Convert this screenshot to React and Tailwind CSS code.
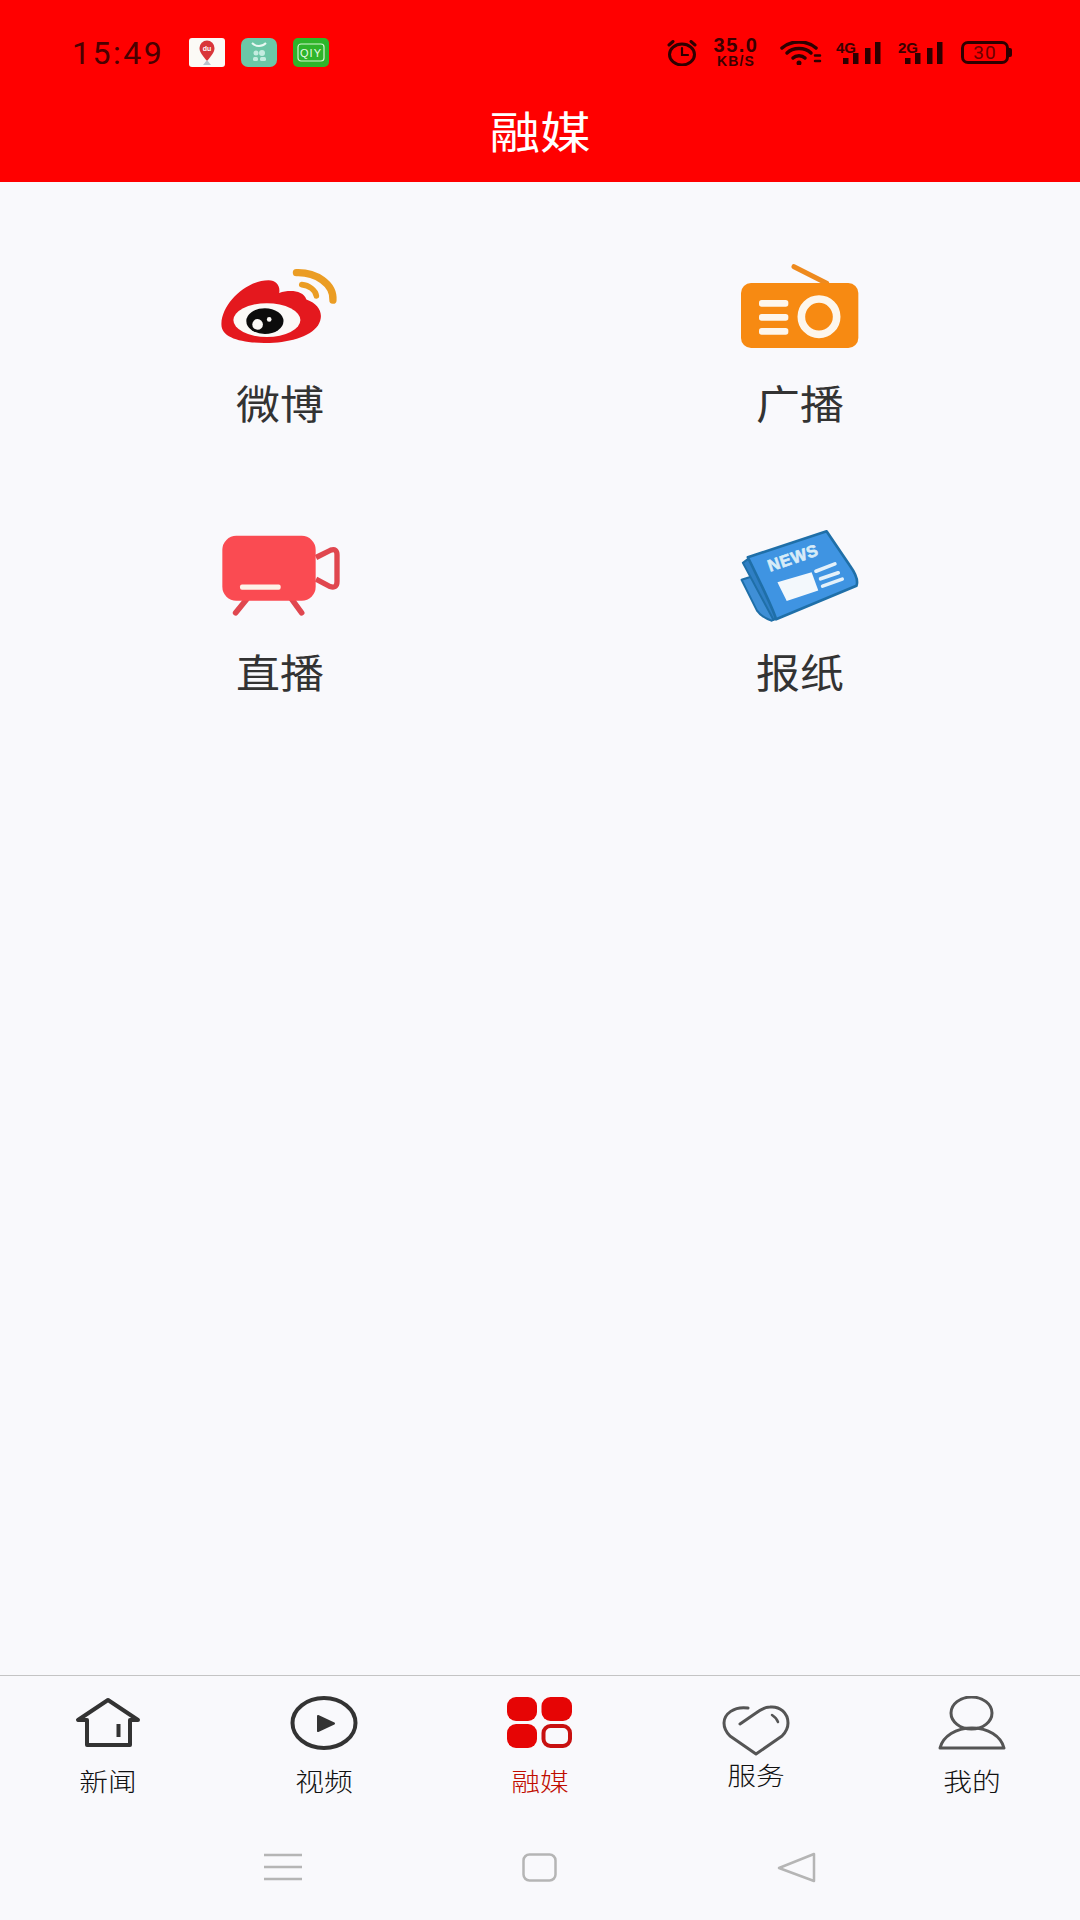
import React from "react"

const items = [
  { label: "微博", icon: <WeiboIcon /> },
  { label: "广播", icon: <RadioIcon /> },
  { label: "直播", icon: <CameraIcon /> },
  { label: "报纸", icon: <NewsIcon /> },
]

const tabs = [
  { label: "新闻", icon: <HomeIcon />, labelClass: "mt-[9px] text-[#111]" },
  { label: "视频", icon: <PlayIcon />, labelClass: "mt-[9px] text-[#111]" },
  { label: "融媒", icon: <GridIcon />, labelClass: "mt-[9px] text-[#c00d00]" },
  { label: "服务", icon: <HeartIcon />, labelClass: "mt-[3px] text-[#111]" },
  { label: "我的", icon: <UserIcon />, labelClass: "mt-[9px] text-[#111]" },
]

function WeiboIcon() {
  return (
    <svg width="122" height="78" viewBox="90 80 365 235">
      <path d="M96 250C98 190 170 120 238 120C262 120 274 138 270 158C302 148 342 150 352 178C394 193 406 225 387 256C362 292 290 310 225 309C150 307 94 292 96 250Z" fill="#e4181e" />
      <ellipse cx="233" cy="240" rx="101" ry="51" fill="#fbf9f7" />
      <ellipse cx="227" cy="243" rx="56" ry="39" fill="#0c0c0c" />
      <circle cx="205" cy="253" r="16" fill="#fbf9f7" />
      <circle cx="240" cy="238" r="7" fill="#fbf9f7" />
      <path d="M322 97C380 95 435 130 432 180" stroke="#eb9d24" strokeWidth="22" strokeLinecap="round" fill="none" />
      <path d="M338 133C360 135 380 150 382 167" stroke="#eb9d24" strokeWidth="17" strokeLinecap="round" fill="none" />
    </svg>
  )
}

function RadioIcon() {
  return (
    <svg width="120" height="85" viewBox="90 70 360 255">
      <path d="M252 78L350 128" stroke="#ee8a1e" strokeWidth="15" strokeLinecap="round" />
      <rect x="93" y="127" width="352" height="195" rx="30" fill="#f78a12" />
      <rect x="147" y="178" width="88" height="20" rx="8" fill="#fdf6ec" />
      <rect x="147" y="220" width="88" height="20" rx="8" fill="#fdf6ec" />
      <rect x="147" y="262" width="88" height="20" rx="8" fill="#fdf6ec" />
      <circle cx="327" cy="228" r="53" stroke="#fdf6ec" strokeWidth="23" fill="none" />
    </svg>
  )
}

function CameraIcon() {
  return (
    <svg width="120" height="82" viewBox="90 70 360 245">
      <path d="M170 265L137 306M305 265L335 306" stroke="#e0474f" strokeWidth="17" strokeLinecap="round" />
      <path d="M378 140L422 118Q441 112 441 132V212Q441 234 420 227L378 205" stroke="#e0474f" strokeWidth="16" fill="none" />
      <rect x="97" y="75" width="280" height="195" rx="42" fill="#fa4b52" />
      <rect x="150" y="221" width="122" height="16" rx="6" fill="#fdf2e8" />
    </svg>
  )
}

function NewsIcon() {
  return (
    <svg width="120" height="93" viewBox="90 55 360 280">
      <path d="M94 208L125 198L205 322L185 331C165 325 150 315 140 300Z" fill="#3f8fd6" stroke="#1f6fa8" strokeWidth="6" strokeLinejoin="round" />
      <path d="M98 157L118 142L208 320L190 328Z" fill="#2f7fc4" stroke="#1f6fa8" strokeWidth="6" strokeLinejoin="round" />
      <path d="M113 140L350 62L420 165C438 190 446 210 440 226L198 327C190 300 150 215 113 140Z" fill="#3f94e2" stroke="#1f6fa8" strokeWidth="8" strokeLinejoin="round" />
      <text x="180" y="184" transform="rotate(-19 180 184)" fontFamily="'Liberation Sans', sans-serif" fontWeight="700" fontSize="50" letterSpacing="2" fill="#d8ecf8" stroke="#d8ecf8" strokeWidth="2">NEWS</text>
      <path d="M202 215L305 185L325 240L230 272Z" fill="#f3f8fc" />
      <path d="M318 182L375 160M332 205L385 187M338 227L397 206" stroke="#e4f1fa" strokeWidth="11" strokeLinecap="round" />
    </svg>
  )
}

function HomeIcon() {
  return (
    <svg width="68" height="60" viewBox="0 0 68 60" fill="none" stroke="#333" strokeLinejoin="round">
      <path d="M13 24V49H56V24H64L34 4L4 24Z" strokeWidth="4" />
      <path d="M44.500 28V41" strokeWidth="4" />
    </svg>
  )
}

function PlayIcon() {
  return (
    <svg width="68" height="60" viewBox="0 0 68 60" fill="none" stroke="#333" strokeLinejoin="round">
      <ellipse cx="34" cy="27" rx="31.500" ry="25" strokeWidth="4" />
      <path d="M28 20L44 27.500L28 35Z" fill="#333" strokeWidth="2" />
    </svg>
  )
}

function GridIcon() {
  return (
    <svg width="68" height="60" viewBox="0 0 68 60">
      <rect x="1" y="1" width="30" height="24" rx="9" fill="#e60505" />
      <rect x="35.500" y="1" width="30.500" height="24" rx="9" fill="#e60505" />
      <rect x="1" y="28" width="30" height="24" rx="9" fill="#e60505" />
      <rect x="37.500" y="30" width="26.500" height="20" rx="7" fill="none" stroke="#c81010" strokeWidth="4" />
    </svg>
  )
}

function HeartIcon() {
  return (
    <svg width="68" height="60" viewBox="0 0 68 60" fill="none" stroke="#555" strokeLinecap="round" strokeLinejoin="round">
      <path d="M26 12C12 10 2 18 2 27C2 32 4 36 8 40L34 58L60 40C64 36 66 32 66 27C66 17 58 10 48 11C42 11 38 14 34 17L18 28" strokeWidth="3" />
      <path d="M50 19C53 21 55 23 56 26" strokeWidth="2.500" />
    </svg>
  )
}

function UserIcon() {
  return (
    <svg width="68" height="60" viewBox="0 0 68 60" fill="none" stroke="#555" strokeLinejoin="round">
      <ellipse cx="33.500" cy="17" rx="20.500" ry="16" strokeWidth="3" />
      <path d="M2 52C5 40 18 32 34 32C50 32 63 40 66 52Z" strokeWidth="3" />
    </svg>
  )
}

function DuIcon() {
  return (
    <svg width="36" height="29" viewBox="0 0 36 29">
      <rect width="36" height="29" rx="3" fill="#fbfaf6" />
      <path d="M18 23C13 17 10.500 14 10.500 10A7.500 7.500 0 0 1 25.500 10C25.500 14 23 17 18 23Z" fill="#d9363a" />
      <text x="18" y="12.500" textAnchor="middle" fontFamily="'Liberation Sans', sans-serif" fontWeight="700" fontSize="7" fill="#fff">du</text>
      <path d="M14 27L18 22L22 27Z" fill="#b9c4cc" />
    </svg>
  )
}

function TeaIcon() {
  return (
    <svg width="36" height="29" viewBox="0 0 36 29">
      <rect width="36" height="29" rx="7" fill="#6cc7a7" />
      <path d="M11 5C15 9 21 9 25 5" stroke="#e8f8f2" strokeWidth="2" fill="none" />
      <circle cx="15" cy="15" r="2.500" fill="#c4ece0" />
      <circle cx="21" cy="15" r="3" fill="#c4ece0" />
      <rect x="12" y="19" width="5" height="4" rx="1.500" fill="#c4ece0" />
      <rect x="19" y="19" width="6" height="4" rx="1.500" fill="#c4ece0" />
    </svg>
  )
}

function IqiyiIcon() {
  return (
    <svg width="36" height="29" viewBox="0 0 36 29">
      <rect width="36" height="29" rx="5" fill="#2fb52a" />
      <rect x="5" y="6" width="26" height="17" rx="3" fill="none" stroke="#d6f5d2" strokeWidth="1.200" />
      <text x="18" y="19" textAnchor="middle" fontFamily="'Liberation Sans', sans-serif" fontWeight="400" fontSize="11" letterSpacing="1" fill="#e8fbe5">QIY</text>
    </svg>
  )
}

function AlarmIcon() {
  return (
    <svg width="30" height="26" viewBox="0 0 30 26" fill="none" stroke="#2e0000" strokeLinecap="round">
      <ellipse cx="15" cy="14.500" rx="12.500" ry="10.500" strokeWidth="3" />
      <path d="M15 8V15H21" strokeWidth="2.200" />
      <path d="M2 5L6 1.500M28 5L24 1.500" strokeWidth="3" />
    </svg>
  )
}

function WifiIcon() {
  return (
    <svg width="42" height="24" viewBox="0 0 42 24" fill="none" stroke="#2e0000" strokeLinecap="round">
      <path d="M2 7C11 -1 27 -1 36 7" strokeWidth="3.500" />
      <path d="M7 12C13 6 25 6 31 12" strokeWidth="3.500" />
      <path d="M13 17C16 14 22 14 25 17" strokeWidth="3.500" />
      <circle cx="19" cy="22" r="2.500" fill="#2e0000" stroke="none" />
      <path d="M35 14.500H40M35 20H40" strokeWidth="2.500" />
    </svg>
  )
}

function SignalIcon({ type }) {
  return (
    <svg className="overflow-visible" width="45" height="24" viewBox="0 0 45 24" fill="#2e0000">
      <text x="0" y="12" fontFamily="'Liberation Sans', sans-serif" fontWeight="700" fontSize="15" fill="#3a0000">{type}</text>
      <rect x="7" y="17" width="5.500" height="6" />
      <rect x="17" y="12" width="5.500" height="11" />
      <rect x="29" y="7" width="5.500" height="16" />
      <rect x="39" y="1" width="5.500" height="22" />
    </svg>
  )
}

function Battery() {
  return (
    <div className="flex items-center">
      <div className="flex h-[23px] w-[48px] items-center justify-center rounded-[7px] border-[3px] border-[#2e0000] font-['Roboto',sans-serif] text-[19px] leading-none font-normal tracking-[1px] text-[#6a0000]">
        30
      </div>
      <div className="h-[9px] w-[3px] rounded-r-[2px] bg-[#2e0000]" />
    </div>
  )
}

export default function App() {
  return (
    <div className="flex h-[1920px] w-[1080px] flex-col overflow-hidden bg-[#f9f9fc] font-['Noto_Sans_CJK_SC','Noto_Sans',sans-serif]">
      {/* header */}
      <header className="h-[182px] shrink-0 bg-[#ff0000]">
        <div className="flex items-center justify-between pt-[37px] pr-[68px] pl-[72px]">
          <div className="flex h-[29px] items-center">
            <span className="w-[117px] font-['Roboto',sans-serif] text-[32px] leading-none font-normal tracking-[2.500px] text-[#4a0000]">15:49</span>
            <div className="flex gap-[16px]">
              <DuIcon />
              <TeaIcon />
              <IqiyiIcon />
            </div>
          </div>
          <div className="flex items-center">
            <AlarmIcon />
            <div className="ml-[15px] flex w-[48px] flex-col items-center font-['Liberation_Sans',sans-serif] font-bold text-[#3a0000]">
              <span className="text-[20px] leading-[17px] tracking-[1.500px]">35.0</span>
              <span className="mt-[1px] text-[14px] leading-[13px] tracking-[1.200px]">KB/S</span>
            </div>
            <div className="ml-[20px]"><WifiIcon /></div>
            <div className="ml-[14px]"><SignalIcon type="4G" /></div>
            <div className="ml-[17px]"><SignalIcon type="2G" /></div>
            <div className="ml-[18px]"><Battery /></div>
          </div>
        </div>
        <div className="mt-[32px] text-center text-[44px] leading-[60px] text-white">
          <span className="inline-block scale-x-[1.15]">融媒</span>
        </div>
      </header>

      {/* media entries */}
      <main className="grid flex-1 grid-cols-2 content-start gap-y-[98px] px-[20px] pt-[74px]">
        {items.map((item) => (
          <div key={item.label} className="flex flex-col items-center">
            <div className="flex h-[100px] items-center justify-center">{item.icon}</div>
            <div className="mt-[21px] text-[40px] leading-[50px] font-normal text-[#333]">
              <span className="inline-block scale-x-110">{item.label}</span>
            </div>
          </div>
        ))}
      </main>

      {/* bottom tabs */}
      <footer className="h-[245px] shrink-0 border-t border-[#c4c4c4]">
        <div className="grid grid-cols-5 pt-[20px]">
          {tabs.map((tab) => (
            <div key={tab.label} className="flex h-[100px] flex-col items-center">
              {tab.icon}
              <div className={`text-[25px] leading-[30px] font-light ${tab.labelClass}`}>
                <span className="inline-block scale-x-[1.15]">{tab.label}</span>
              </div>
            </div>
          ))}
        </div>
        <div className="flex h-[124px] items-center justify-center gap-[220px] pt-[18px]">
          <svg width="38" height="28" viewBox="0 0 38 28" stroke="#b5b5b5" strokeWidth="2.500">
            <path d="M0 2H38M0 14H38M0 26H38" />
          </svg>
          <svg width="35" height="29" viewBox="0 0 35 29" fill="none" stroke="#b5b5b5" strokeWidth="2.500">
            <rect x="1.500" y="1.500" width="32" height="26" rx="6" />
          </svg>
          <svg width="39" height="31" viewBox="0 0 39 31" fill="none" stroke="#b5b5b5" strokeWidth="2.500" strokeLinejoin="round">
            <path d="M37 2V29L2 16Z" />
          </svg>
        </div>
      </footer>
    </div>
  )
}
